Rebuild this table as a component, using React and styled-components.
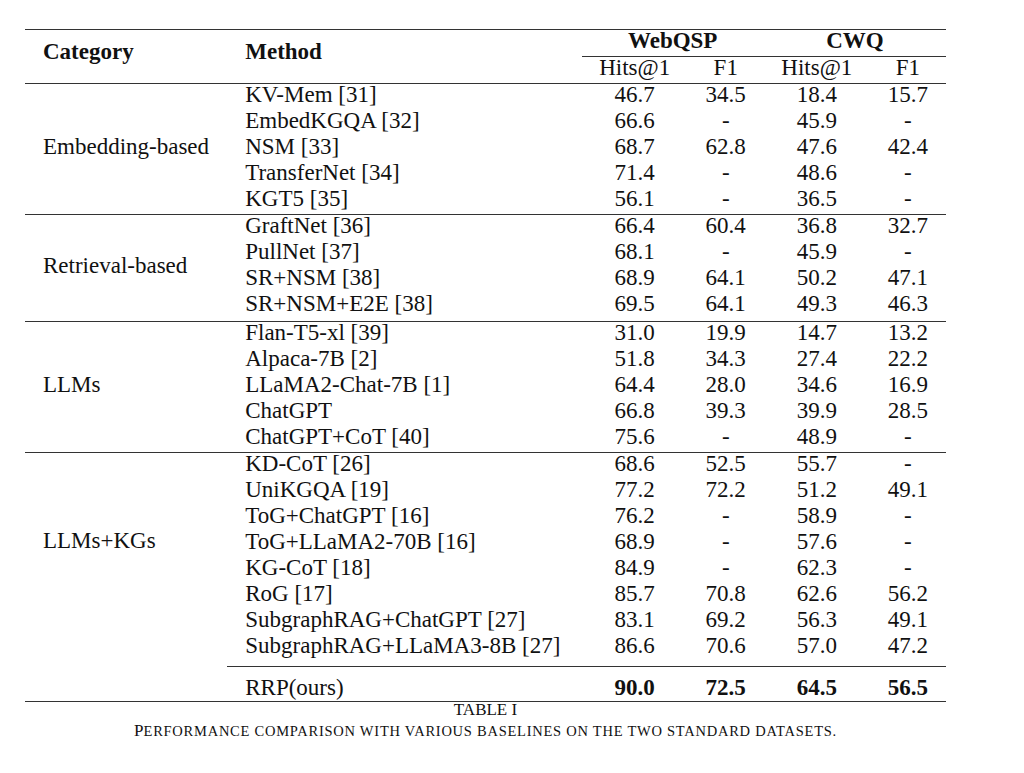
import React from 'react';
import styled, { createGlobalStyle } from 'styled-components';

const GlobalStyle = createGlobalStyle`
  html, body {
    margin: 0;
    padding: 0;
    background: #ffffff;
  }
  body {
    font-family: "Liberation Serif", "Times New Roman", serif;
    color: #111;
  }
`;

const groups = [
  {
    name: 'Embedding-based',
    rows: [
      ['KV-Mem [31]', '46.7', '34.5', '18.4', '15.7'],
      ['EmbedKGQA [32]', '66.6', '-', '45.9', '-'],
      ['NSM [33]', '68.7', '62.8', '47.6', '42.4'],
      ['TransferNet [34]', '71.4', '-', '48.6', '-'],
      ['KGT5 [35]', '56.1', '-', '36.5', '-'],
    ],
  },
  {
    name: 'Retrieval-based',
    tail: 2,
    rows: [
      ['GraftNet [36]', '66.4', '60.4', '36.8', '32.7'],
      ['PullNet [37]', '68.1', '-', '45.9', '-'],
      ['SR+NSM [38]', '68.9', '64.1', '50.2', '47.1'],
      ['SR+NSM+E2E [38]', '69.5', '64.1', '49.3', '46.3'],
    ],
  },
  {
    name: 'LLMs',
    rows: [
      ['Flan-T5-xl [39]', '31.0', '19.9', '14.7', '13.2'],
      ['Alpaca-7B [2]', '51.8', '34.3', '27.4', '22.2'],
      ['LLaMA2-Chat-7B [1]', '64.4', '28.0', '34.6', '16.9'],
      ['ChatGPT', '66.8', '39.3', '39.9', '28.5'],
      ['ChatGPT+CoT [40]', '75.6', '-', '48.9', '-'],
    ],
  },
  {
    name: 'LLMs+KGs',
    tail: 5,
    lift: 38,
    rows: [
      ['KD-CoT [26]', '68.6', '52.5', '55.7', '-'],
      ['UniKGQA [19]', '77.2', '72.2', '51.2', '49.1'],
      ['ToG+ChatGPT [16]', '76.2', '-', '58.9', '-'],
      ['ToG+LLaMA2-70B [16]', '68.9', '-', '57.6', '-'],
      ['KG-CoT [18]', '84.9', '-', '62.3', '-'],
      ['RoG [17]', '85.7', '70.8', '62.6', '56.2'],
      ['SubgraphRAG+ChatGPT [27]', '83.1', '69.2', '56.3', '49.1'],
      ['SubgraphRAG+LLaMA3-8B [27]', '86.6', '70.6', '57.0', '47.2'],
    ],
  },
];

const ours = ['RRP(ours)', '90.0', '72.5', '64.5', '56.5'];

const App = () => (
  <>
    <GlobalStyle />
    <Figure>
      <Table>
        <colgroup>
          <col style={{ width: 202 }} />
          <col style={{ width: 354 }} />
          <col style={{ width: 106 }} />
          <col style={{ width: 76 }} />
          <col style={{ width: 106 }} />
          <col style={{ width: 76 }} />
        </colgroup>
        <thead>
          <tr>
            <HeadCell rowSpan={2} $top $bottom $align="left" $lift={5}>Category</HeadCell>
            <HeadCell rowSpan={2} $top $bottom $align="left" $lift={5}>Method</HeadCell>
            <HeadCell colSpan={2} $top $underline>WebQSP</HeadCell>
            <HeadCell colSpan={2} $top $underline>CWQ</HeadCell>
          </tr>
          <tr>
            <SubHead>Hits@1</SubHead>
            <SubHead>F1</SubHead>
            <SubHead>Hits@1</SubHead>
            <SubHead>F1</SubHead>
          </tr>
        </thead>
        {groups.map((g, gi) => (
          <tbody key={g.name}>
            {g.rows.map((r, ri) => {
              const first = ri === 0 && gi > 0;
              const tail = ri === g.rows.length - 1 ? g.tail || 0 : 0;
              return (
                <tr key={r[0]}>
                  {ri === 0 && (
                    <CategoryCell rowSpan={g.rows.length} $top={gi > 0} $lift={g.lift || 4}>
                      {g.name}
                    </CategoryCell>
                  )}
                  <Cell $align="left" $top={first} $tail={tail}>{r[0]}</Cell>
                  {r.slice(1).map((v, vi) => (
                    <Cell key={vi} $top={first} $tail={tail}>{v}</Cell>
                  ))}
                </tr>
              );
            })}
          </tbody>
        ))}
        <tbody>
          <OursRow>
            <Cell />
            <Cell $align="left" $top>{ours[0]}</Cell>
            {ours.slice(1).map((v, vi) => (
              <Cell key={vi} $top $bold>{v}</Cell>
            ))}
          </OursRow>
        </tbody>
      </Table>
      <Caption>
        <CaptionTitle>TABLE I</CaptionTitle>
        <CaptionText>
          P<SmallCaps>erformance comparison with various baselines on the two standard datasets.</SmallCaps>
        </CaptionText>
      </Caption>
    </Figure>
  </>
);

export default App;

// styled-components
const rule = '1px solid #333';

const Figure = styled.div`
  width: 921px;
  margin: 29px 0 0 25px;
`;

const Table = styled.table`
  width: 921px;
  table-layout: fixed;
  border-collapse: collapse;
  font-family: "Liberation Serif", "Times New Roman", serif;
  font-size: 23px;
  color: #111;
  border-bottom: ${rule};
`;

const HeadCell = styled.th`
  height: 22px;
  padding: 0 18px ${(p) => (p.$lift || 0) + 4}px;
  line-height: 22px;
  font-weight: 700;
  text-align: ${(p) => p.$align || 'center'};
  vertical-align: ${(p) => (p.$lift ? 'middle' : 'top')};
  border-top: ${(p) => (p.$top ? rule : 'none')};
  border-bottom: ${(p) => (p.$bottom || p.$underline ? rule : 'none')};
  white-space: nowrap;
`;

const SubHead = styled.th`
  height: 22px;
  padding: 0 0 4px;
  line-height: 22px;
  font-weight: 400;
  text-align: center;
  vertical-align: top;
  border-bottom: ${rule};
  white-space: nowrap;
`;

const Cell = styled.td`
  height: 22px;
  padding: 0 ${(p) => (p.$align === 'left' ? '18px' : '0')} ${(p) => 4 + (p.$tail || 0)}px;
  line-height: 22px;
  font-weight: ${(p) => (p.$bold ? 700 : 400)};
  text-align: ${(p) => p.$align || 'center'};
  vertical-align: top;
  border-top: ${(p) => (p.$top ? rule : 'none')};
  white-space: nowrap;
`;

const CategoryCell = styled.td`
  padding: 0 18px ${(p) => p.$lift}px;
  line-height: 22px;
  text-align: left;
  vertical-align: middle;
  border-top: ${(p) => (p.$top ? rule : 'none')};
  white-space: nowrap;
`;

const OursRow = styled.tr`
  td {
    height: 34px;
    padding-top: 8px;
    padding-bottom: 0;
    line-height: 26px;
    box-sizing: border-box;
  }
`;

const Caption = styled.div`
  margin-top: -3px;
  text-align: center;
  font-family: "Liberation Serif", "Times New Roman", serif;
  font-size: 17px;
  line-height: 21px;
  color: #111;
`;

const CaptionTitle = styled.div``;

const CaptionText = styled.div`
  font-size: 17px;
`;

const SmallCaps = styled.span`
  font-size: 14.5px;
  text-transform: uppercase;
  letter-spacing: 0.75px;
`;
